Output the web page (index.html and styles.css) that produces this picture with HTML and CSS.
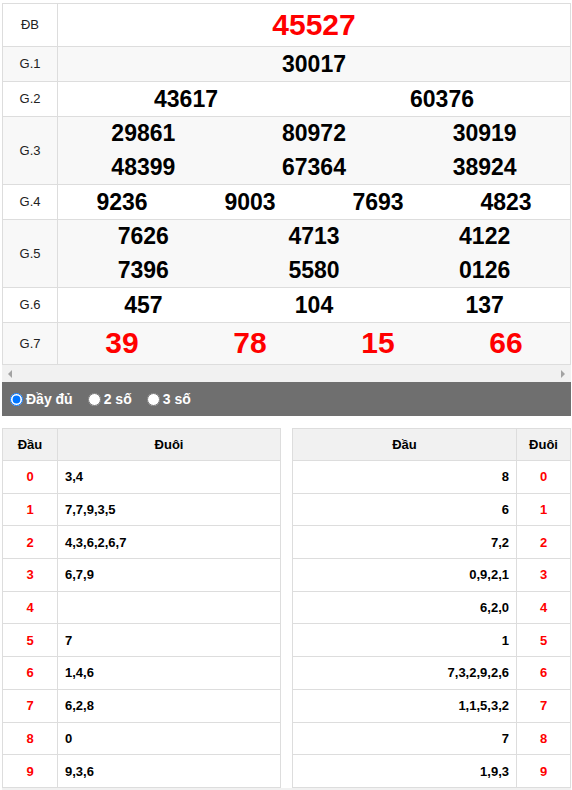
FILE: index.html
```html
<!DOCTYPE html>
<html lang="vi">
<head>
<meta charset="utf-8">
<link rel="stylesheet" href="styles.css">
</head>
<body>
<div class="page">
  <div class="kq">
    <div class="row r-db">
      <div class="lbl">ĐB</div>
      <div class="nums c1"><span class="n red big">45527</span></div>
    </div>
    <div class="row alt">
      <div class="lbl">G.1</div>
      <div class="nums c1"><span class="n">30017</span></div>
    </div>
    <div class="row">
      <div class="lbl">G.2</div>
      <div class="nums c2"><span class="n">43617</span><span class="n">60376</span></div>
    </div>
    <div class="row alt dbl">
      <div class="lbl">G.3</div>
      <div class="nums c3"><span class="n">29861</span><span class="n">80972</span><span class="n">30919</span><span class="n">48399</span><span class="n">67364</span><span class="n">38924</span></div>
    </div>
    <div class="row">
      <div class="lbl">G.4</div>
      <div class="nums c4"><span class="n">9236</span><span class="n">9003</span><span class="n">7693</span><span class="n">4823</span></div>
    </div>
    <div class="row alt dbl">
      <div class="lbl">G.5</div>
      <div class="nums c3"><span class="n">7626</span><span class="n">4713</span><span class="n">4122</span><span class="n">7396</span><span class="n">5580</span><span class="n">0126</span></div>
    </div>
    <div class="row">
      <div class="lbl">G.6</div>
      <div class="nums c3"><span class="n">457</span><span class="n">104</span><span class="n">137</span></div>
    </div>
    <div class="row alt r-g7">
      <div class="lbl">G.7</div>
      <div class="nums c4"><span class="n red big">39</span><span class="n red big">78</span><span class="n red big">15</span><span class="n red big">66</span></div>
    </div>
  </div>
  <div class="hscroll">
    <span class="arr arr-l"></span>
    <span class="arr arr-r"></span>
  </div>
  <div class="opts">
    <label class="opt"><input type="radio" name="mode" checked> Đầy đủ</label>
    <label class="opt"><input type="radio" name="mode"> 2 số</label>
    <label class="opt"><input type="radio" name="mode"> 3 số</label>
  </div>
  <div class="lt">
    <table class="loto">
      <thead><tr><th class="hc">Đầu</th><th>Đuôi</th></tr></thead>
      <tbody>
        <tr><td class="hc red">0</td><td class="tl">3,4</td></tr>
        <tr><td class="hc red">1</td><td class="tl">7,7,9,3,5</td></tr>
        <tr><td class="hc red">2</td><td class="tl">4,3,6,2,6,7</td></tr>
        <tr><td class="hc red">3</td><td class="tl">6,7,9</td></tr>
        <tr><td class="hc red">4</td><td class="tl"></td></tr>
        <tr><td class="hc red">5</td><td class="tl">7</td></tr>
        <tr><td class="hc red">6</td><td class="tl">1,4,6</td></tr>
        <tr><td class="hc red">7</td><td class="tl">6,2,8</td></tr>
        <tr><td class="hc red">8</td><td class="tl">0</td></tr>
        <tr><td class="hc red">9</td><td class="tl">9,3,6</td></tr>
      </tbody>
    </table>
    <table class="loto">
      <thead><tr><th>Đầu</th><th class="hc2">Đuôi</th></tr></thead>
      <tbody>
        <tr><td class="tr">8</td><td class="hc2 red">0</td></tr>
        <tr><td class="tr">6</td><td class="hc2 red">1</td></tr>
        <tr><td class="tr">7,2</td><td class="hc2 red">2</td></tr>
        <tr><td class="tr">0,9,2,1</td><td class="hc2 red">3</td></tr>
        <tr><td class="tr">6,2,0</td><td class="hc2 red">4</td></tr>
        <tr><td class="tr">1</td><td class="hc2 red">5</td></tr>
        <tr><td class="tr">7,3,2,9,2,6</td><td class="hc2 red">6</td></tr>
        <tr><td class="tr">1,1,5,3,2</td><td class="hc2 red">7</td></tr>
        <tr><td class="tr">7</td><td class="hc2 red">8</td></tr>
        <tr><td class="tr">1,9,3</td><td class="hc2 red">9</td></tr>
      </tbody>
    </table>
  </div>
  <div class="foot"></div>
</div>
</body>
</html>
```
FILE: styles.css
```css
html, body {
  margin: 0;
  padding: 0;
  background: #fff;
}
body {
  font-family: "Liberation Sans", Arial, sans-serif;
  color: #000;
}
.page {
  padding: 3px 1px 0 2px;
}
.kq {
  border-top: 1px solid #ddd;
  border-left: 1px solid #ddd;
}
.row {
  display: flex;
  height: 34px;
  border-bottom: 1px solid #ddd;
}
.row.alt { background: #f8f8f8; }
.row.r-db { height: 42px; }
.row.dbl { height: 67px; }
.row.r-g7 { height: 41px; }
.lbl {
  width: 55px;
  flex: none;
  border-right: 1px solid #ddd;
  display: flex;
  align-items: center;
  justify-content: center;
  font-size: 13px;
  color: #222;
  padding-bottom: 1px;
  box-sizing: border-box;
}
.nums {
  flex: 1;
  display: grid;
  border-right: 1px solid #ddd;
  align-items: center;
  align-content: stretch;
}
.c1 { grid-template-columns: 1fr; }
.c2 { grid-template-columns: 1fr 1fr; }
.c3 { grid-template-columns: repeat(3, 1fr); }
.c4 { grid-template-columns: repeat(4, 1fr); }
.n {
  text-align: center;
  font-weight: bold;
  font-size: 23px;
  line-height: 26px;
  padding-bottom: 1px;
}
.n.big {
  font-size: 30px;
  line-height: 34px;
}
.red { color: #ff0000; }
.hscroll {
  position: relative;
  height: 17px;
  background: #f1f1f1;
}
.arr {
  position: absolute;
  top: 5px;
  width: 0;
  height: 0;
  border-top: 4px solid transparent;
  border-bottom: 4px solid transparent;
}
.arr-l {
  left: 6px;
  border-right: 4px solid #a3a3a3;
}
.arr-r {
  right: 6px;
  border-left: 4px solid #a3a3a3;
}
.opts {
  background: #6f6f6f;
  height: 34px;
  display: flex;
  align-items: center;
  padding-left: 3px;
  gap: 10px;
}
.opt {
  color: #fff;
  font-weight: bold;
  font-size: 14px;
  display: flex;
  align-items: center;
}
.opt input {
  margin: 0 3px 0 5px;
  width: 13px;
  height: 13px;
}
.lt {
  margin-top: 12px;
  display: grid;
  grid-template-columns: 1fr 1fr;
  gap: 11px;
}
.loto {
  border-collapse: collapse;
  width: 100%;
  font-size: 13px;
  font-weight: bold;
}
.loto th, .loto td {
  border: 1px solid #ddd;
  padding: 0 7px;
}
.loto th {
  background: #f1f1f1;
  height: 31px;
  text-align: center;
}
.loto td {
  height: 31.7px;
}
.loto .hc { width: 40px; text-align: center; }
.loto .hc2 { width: 39px; text-align: center; }
.loto .tl { text-align: left; }
.loto .tr { text-align: right; }
.foot {
  height: 4px;
  background: #f1f1f1;
  margin-top: 0;
}
```
